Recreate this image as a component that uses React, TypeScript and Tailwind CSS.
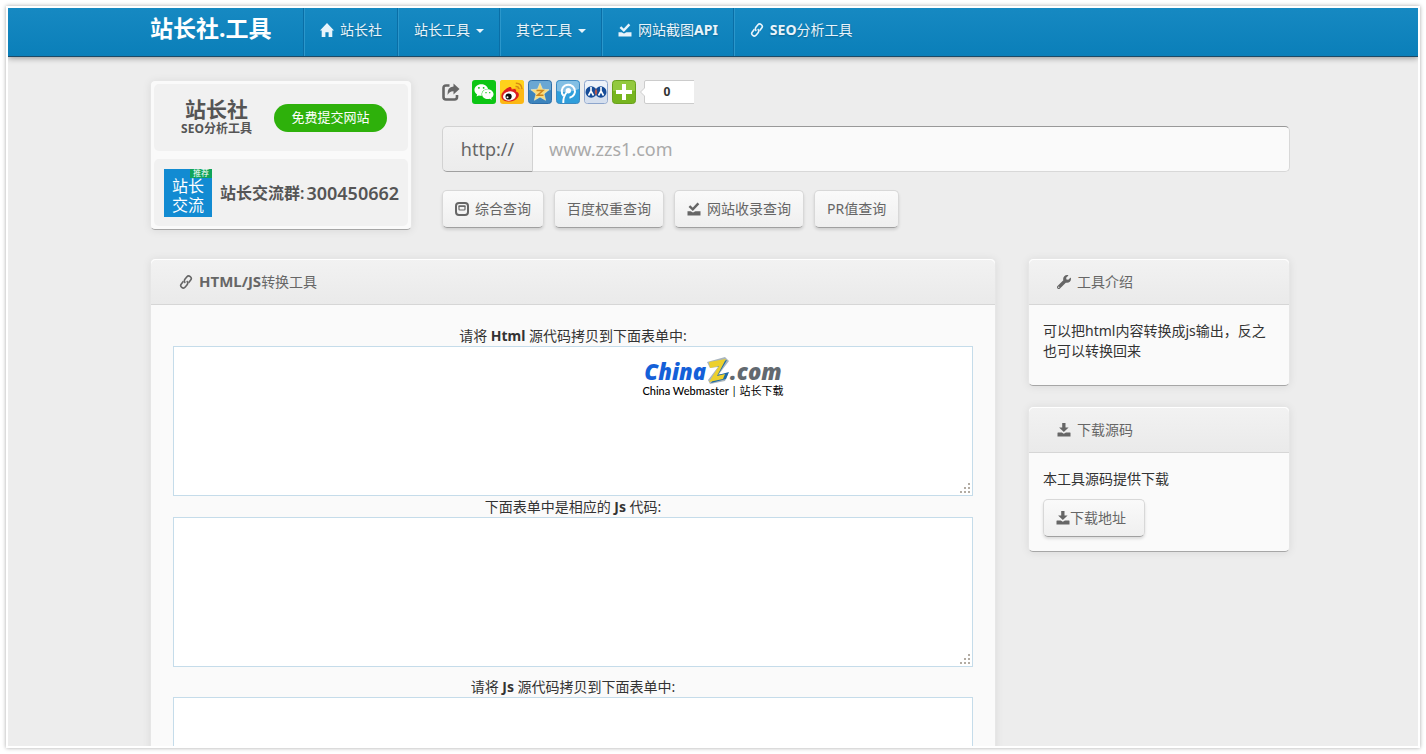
import type { ReactNode } from "react";
import { FaWeixin, FaWrench } from "react-icons/fa";

const BUTTON =
  "inline-flex h-[38px] items-center gap-1.5 rounded-[5px] border border-[#d8d8d8] border-b-[#a0a0a0] bg-linear-to-b from-[#fafafa] to-[#efefef] pl-3 text-sm text-[#666] shadow-[0_2px_3px_rgba(0,0,0,0.12)]";

const CARD =
  "rounded-[5px] border border-[#e6e6e6] border-b-[#a6a6a6] bg-[#fafafa] shadow-[0_1px_8px_rgba(0,0,0,0.08)]";

function HomeIcon() {
  return (
    <svg className="size-3.5" viewBox="0 0 14 14" fill="currentColor">
      <path d="M7 0 14 7.6H12.3V14H8.6V9.3H5.4V14H1.7V7.6H0Z" />
    </svg>
  );
}

function CheckTrayIcon() {
  return (
    <svg className="size-3.5" viewBox="0 0 14 14">
      <path d="M.5 9.2H3.6L6 10.6 8.4 9.2H13.5V13.4H.5Z" fill="currentColor" />
      <path d="M2.4 4.200 5.800 7.400 11.400 1.400" fill="none" stroke="currentColor" strokeWidth="2.4" />
    </svg>
  );
}

function LinkIcon() {
  return (
    <svg className="size-3.5" viewBox="0 0 14 14" fill="none" stroke="currentColor" strokeWidth="1.6">
      <g transform="rotate(38 7 7)">
        <path d="M9.5 6V2.600a2.500 2.500 0 0 0-5 0V5.600a2.500 2.500 0 0 0 2.500 2.500" />
        <path d="M4.500 8V11.400a2.500 2.500 0 0 0 5 0V8.400a2.500 2.500 0 0 0-2.500-2.500" />
      </g>
    </svg>
  );
}

function DownloadIcon() {
  return (
    <svg className="size-3.5" viewBox="0 0 14 14" fill="currentColor">
      <path d="M5.2 0H8.500V4.500H11.600L6.850 9 2.100 4.500H5.200Z" />
      <path d="M1 9.500H4.800L6.850 10.800 8.900 9.500H13Q13.500 9.500 13.500 10V13.500H.5V10Q.5 9.500 1 9.500Z" />
    </svg>
  );
}

function PanelIcon() {
  return (
    <svg className="size-3.5" viewBox="0 0 14 14" fill="none" stroke="currentColor">
      <rect x="1" y="1" width="12" height="12" rx="3" strokeWidth="2" />
      <rect x="4" y="4" width="6" height="4" rx=".8" strokeWidth="1.200" />
      <path d="M3.500 4.200H10.500" strokeWidth="1.400" />
    </svg>
  );
}

function ShareIcon() {
  return (
    <svg className="size-[18px] text-[#666]" viewBox="0 0 18 18">
      <path
        d="M7.500 2.500H4Q1.500 2.500 1.500 5V14Q1.500 16.500 4 16.500H12.500Q15 16.500 15 14V12"
        fill="none"
        stroke="currentColor"
        strokeWidth="2.600"
      />
      <path d="M11.500.5 17.500 6 11.500 11.500V8.200Q7.500 8 5.500 12 5 4 11.500 3.600Z" fill="currentColor" />
    </svg>
  );
}

function Caret() {
  return <span className="mt-0.5 border-x-4 border-t-4 border-x-transparent border-t-current" />;
}

function WeiboIcon() {
  return (
    <svg className="size-6" viewBox="0 0 24 24">
      <rect width="24" height="24" rx="3" fill="#fcb814" />
      <path d="M0 3Q0 0 3 0H21Q24 0 24 3V9Q12 5 0 14Z" fill="#ffd21c" />
      <path
        d="M8.500 7.500C10.500 6.500 12 7.500 11.500 9.500 14.500 8.300 16.800 8.800 16 11.600 18.500 12.300 19.500 14 18.500 16.500 17 20 12 22 7.500 21.500 3 21 .8 18.500 1.500 15 2.200 12 5.500 8.800 8.500 7.500Z"
        fill="#dd1f20"
      />
      <ellipse cx="9.500" cy="16" rx="6.500" ry="4.600" transform="rotate(-10 9.500 16)" fill="#fff" />
      <circle cx="8.600" cy="16.500" r="3.100" fill="#111" />
      <circle cx="7.500" cy="17.300" r="1" fill="#fff" />
      <path d="M15.500 6.500Q18.500 6 19 9M15.800 3.200Q21.500 3 22 9" fill="none" stroke="#d98b12" strokeWidth="1.500" />
    </svg>
  );
}

function QzoneIcon() {
  return (
    <svg className="size-6" viewBox="0 0 24 24">
      <rect x=".5" y=".5" width="23" height="23" rx="3" fill="#3d84bd" stroke="#2e6ea8" />
      <path d="M1 4Q1 1 4 1H20Q23 1 23 4V10Q12 14 1 10Z" fill="#6aa7d3" />
      <path
        d="M12 3.200 14.500 9.200 21 9.700 16 14 17.600 20.300 12 17 6.400 20.300 8 14 3 9.700 9.500 9.200Z"
        fill="#fbdc7b"
        stroke="#f4ecc4"
        strokeWidth=".6"
      />
      <path d="M8.500 10.500H15L9.500 15.300H15.500" fill="none" stroke="#cf861c" strokeWidth="1.500" />
    </svg>
  );
}

function TencentIcon() {
  return (
    <svg className="size-6" viewBox="0 0 24 24">
      <rect x=".5" y=".5" width="23" height="23" rx="3" fill="#2f9edb" stroke="#3a88c0" />
      <path d="M1 4Q1 1 4 1H20Q23 1 23 4V9Q12 14 1 11Z" fill="#83bfe4" />
      <path d="M7.300 23Q7 17 10.500 12.500M7.500 15.800A6.600 6.600 0 1 1 13.500 17.800" fill="none" stroke="#fff" strokeWidth="2" />
      <circle cx="12.300" cy="10.800" r="2.700" fill="#fff" />
    </svg>
  );
}

function RenrenIcon() {
  return (
    <svg className="size-6" viewBox="0 0 24 24">
      <rect x=".5" y=".5" width="23" height="23" rx="3" fill="#eef3fa" stroke="#8da5cc" />
      <path d="M1 12H23V20Q23 23 20 23H4Q1 23 1 20Z" fill="#d5dfee" />
      <circle cx="7.200" cy="12" r="5.700" fill="#164c98" />
      <circle cx="16.800" cy="12" r="5.700" fill="#164c98" />
      <path d="M12 8.500Q14.500 12 12 15.500 9.500 12 12 8.500Z" fill="#b8584d" />
      <path d="M7 7V11L4.500 15.500M7 11 9.500 15.500M17 7V11L14.500 15.500M17 11 19.500 15.500" fill="none" stroke="#fff" strokeWidth="1.600" />
    </svg>
  );
}

function PlusIcon() {
  return (
    <svg className="size-6" viewBox="0 0 24 24">
      <rect x=".5" y=".5" width="23" height="23" rx="3" fill="#77b51f" stroke="#69a11d" />
      <path d="M1 4Q1 1 4 1H20Q23 1 23 4V11H1Z" fill="#93c93f" />
      <path d="M12 4V20M4 12H20" stroke="#fff" strokeWidth="4" />
    </svg>
  );
}

function NavItem({ children }: { children: ReactNode }) {
  return (
    <a
      href="#"
      className="flex items-center gap-1.5 border-l border-[#0a6ea6] pt-3 pr-[15px] pb-4 pl-4 text-sm leading-5 whitespace-nowrap text-[#e8f4fb] shadow-[inset_1px_0_#2b97cb] [text-shadow:0_1px_2px_rgba(0,0,0,0.25)]"
    >
      {children}
    </a>
  );
}

function CardHeader({ icon, children }: { icon: ReactNode; children: ReactNode }) {
  return (
    <h2 className="flex h-[46px] items-center gap-1.5 rounded-t-[5px] border-b border-[#d6d6d6] bg-linear-to-b from-[#f2f2f2] to-[#eaeaea] px-7 text-sm text-[#666] shadow-[inset_0_1px_#fff]">
      {icon}
      <span>{children}</span>
    </h2>
  );
}

function CodeField({ id, children }: { id: string; children: ReactNode }) {
  return (
    <div>
      <label htmlFor={id} className="block text-center text-sm leading-[21px]">
        {children}
      </label>
      <div className="relative">
        <textarea
          id={id}
          className="block h-[150px] w-full resize-none border border-[#c5dcea] bg-white p-1 text-sm outline-none"
        />
        <svg className="absolute right-[3px] bottom-[3px] size-2.5" viewBox="0 0 10 10" fill="#b3aca3">
          <path d="M8 0h2v2h-2zM4 4h2v2h-2zM8 4h2v2h-2zM0 8h2v2h-2zM4 8h2v2h-2zM8 8h2v2h-2z" />
        </svg>
      </div>
    </div>
  );
}

function Watermark() {
  return (
    <div className="pointer-events-none absolute inset-0 flex flex-col items-center justify-center">
      <div className="flex items-center font-['Open_Sans',sans-serif] text-[22px] leading-7 font-extrabold italic">
        <span className="text-[#1460d8]">China</span>
        <svg className="h-7 w-6" viewBox="0 0 24 28">
          <path d="M1 5 19 0 23 4 13 17H22L19 24 4 27 2 23 12 10 4 11Z" fill="#a9b5bd" />
          <path d="M5 7 21 3 12 18 23 15 20 22 5 26 14 10Z" fill="#1c6aa8" />
          <path d="M3 5 20 2 11 19 19 17 17 22 3 25 13 9 4 11Z" fill="#ecd02c" />
        </svg>
        <span className="text-[#626970]">.com</span>
      </div>
      <div className="flex gap-1 font-['Lato','Noto_Sans_CJK_SC',sans-serif] text-[11px] leading-3 text-black">
        <span className="font-medium">China Webmaster</span>
        <span>|</span>
        <span>站长下载</span>
      </div>
    </div>
  );
}

export default function App() {
  return (
    <div className="h-screen bg-white p-1.5 font-['Noto_Sans','Noto_Sans_CJK_SC',sans-serif] text-[#333]">
      <div className="relative h-full overflow-hidden border-2 border-white bg-[#ededed] shadow-[0_0_4px_rgba(0,0,0,0.35)]">
        <header className="relative border-b border-[#1c4a66] bg-linear-to-b from-[#1689c2] to-[#0a7fb9] pl-3.5 shadow-[0_1px_6px_rgba(0,0,0,0.4)]">
          <nav className="mx-auto flex max-w-[1140px]">
            <a
              href="#"
              className="w-[153px] pt-1 text-[23px] leading-8 font-bold whitespace-nowrap text-white"
            >
              站长社.工具
            </a>
            <NavItem>
              <HomeIcon />
              站长社
            </NavItem>
            <NavItem>
              站长工具
              <Caret />
            </NavItem>
            <NavItem>
              其它工具
              <Caret />
            </NavItem>
            <NavItem>
              <CheckTrayIcon />
              <span>
                网站截图<b>API</b>
              </span>
            </NavItem>
            <NavItem>
              <LinkIcon />
              <span>
                <b>SEO</b>分析工具
              </span>
            </NavItem>
          </nav>
        </header>

        <div className="pl-3.5">
          <main className="mx-auto max-w-[1140px] pt-[23px]">
            <div className="flex gap-[30px]">
              <div className={`${CARD} flex w-[262px] shrink-0 flex-col gap-2 p-[3px]`}>
                <div className="flex h-[67px] items-center rounded-[5px] bg-[#f1f1f1] pl-[25px]">
                  <div className="w-[75px] text-center font-bold whitespace-nowrap text-[#555]">
                    <p className="text-[21px] leading-[22px]">站长社</p>
                    <p className="text-xs leading-[18px]">SEO分析工具</p>
                  </div>
                  <button
                    type="button"
                    className="ml-5 h-7 w-[113px] rounded-full bg-[#2eb10b] text-[13px] text-white"
                  >
                    免费提交网站
                  </button>
                </div>
                <div className="flex h-[67px] items-center gap-2 rounded-[5px] bg-[#f1f1f1] pl-2.5 whitespace-nowrap">
                  <div className="relative size-12 bg-[#128bd2] pt-2 text-center font-['Liberation_Sans','Noto_Sans_CJK_SC',sans-serif] text-base leading-[19px] text-white">
                    站长
                    <br />
                    交流
                    <span className="absolute top-0 right-0 bg-[#10a45a] px-[3px] text-[8px] leading-[9px]">
                      推荐
                    </span>
                  </div>
                  <p className="flex items-center gap-0.5 text-base font-semibold text-[#555]">
                    站长交流群:
                    <span className="text-lg">300450662</span>
                  </p>
                </div>
              </div>

              <div className="min-w-0 flex-1">
                <div className="flex h-6 items-center gap-1">
                  <div className="mr-2">
                    <ShareIcon />
                  </div>
                  <span className="flex size-6 items-center justify-center rounded-[3px] bg-[#0cc514] text-white">
                    <FaWeixin size={20} />
                  </span>
                  <WeiboIcon />
                  <QzoneIcon />
                  <TencentIcon />
                  <RenrenIcon />
                  <PlusIcon />
                  <span className="flex h-6 w-[54px]">
                    <svg className="h-6 w-2" viewBox="0 0 8 24">
                      <path d="M8 .5H6Q4.500 .5 4.500 2V8L.5 12 4.500 16V22Q4.500 23.500 6 23.500H8" fill="#fff" stroke="#ccc" />
                    </svg>
                    <span className="flex-1 border-y border-[#ccc] bg-white pr-2 text-center text-xs leading-[22px] font-bold">
                      0
                    </span>
                  </span>
                </div>

                <div className="mt-[22px] flex h-[46px] text-lg">
                  <label
                    htmlFor="site"
                    className="w-[91px] rounded-l-[5px] border border-[#d2d2d2] border-b-[#a0a0a0] bg-linear-to-b from-[#f3f3f3] to-[#ececec] text-center leading-[44px] text-[#666]"
                  >
                    http://
                  </label>
                  <input
                    id="site"
                    type="text"
                    placeholder="www.zzs1.com"
                    className="min-w-0 flex-1 rounded-r-[5px] border border-l-0 border-[#d8d8d8] border-t-[#999] bg-[#fafafa] px-4 outline-none placeholder:text-[#aaa]"
                  />
                </div>

                <div className="mt-[18px] flex gap-2.5">
                  <button type="button" className={`${BUTTON} pr-3`}>
                    <PanelIcon />
                    综合查询
                  </button>
                  <button type="button" className={`${BUTTON} pr-3`}>
                    百度权重查询
                  </button>
                  <button type="button" className={`${BUTTON} pr-3`}>
                    <CheckTrayIcon />
                    网站收录查询
                  </button>
                  <button type="button" className={`${BUTTON} pr-3`}>
                    PR值查询
                  </button>
                </div>
              </div>
            </div>

            <div className="mt-7 flex items-start gap-8">
              <section className={`${CARD} min-w-0 flex-1`}>
                <CardHeader icon={<LinkIcon />}>
                  <b className="text-[15px]">HTML/JS</b>转换工具
                </CardHeader>
                <div className="px-[22px] py-5">
                  <CodeField id="html-source">
                    请将 <b>Html</b> 源代码拷贝到下面表单中:
                  </CodeField>
                  <CodeField id="js-result">
                    下面表单中是相应的 <b>Js</b> 代码:
                  </CodeField>
                  <div className="mt-[9px]">
                    <CodeField id="js-source">
                      请将 <b>Js</b> 源代码拷贝到下面表单中:
                    </CodeField>
                  </div>
                </div>
              </section>

              <aside className="flex w-[262px] shrink-0 flex-col gap-5">
                <section className={CARD}>
                  <CardHeader icon={<FaWrench size={14} />}>工具介绍</CardHeader>
                  <p className="px-3.5 pt-4 pb-6 text-sm leading-5">
                    可以把html内容转换成js输出，反之也可以转换回来
                  </p>
                </section>
                <section className={CARD}>
                  <CardHeader icon={<DownloadIcon />}>下载源码</CardHeader>
                  <div className="px-3.5 pt-4 pb-3.5">
                    <p className="mb-2.5 text-sm leading-5">本工具源码提供下载</p>
                    <button type="button" className={`${BUTTON} pr-[18px]`}>
                      <span className="flex items-center">
                        <DownloadIcon />
                        下载地址
                      </span>
                    </button>
                  </div>
                </section>
              </aside>
            </div>
          </main>
        </div>

        <Watermark />
      </div>
    </div>
  );
}
